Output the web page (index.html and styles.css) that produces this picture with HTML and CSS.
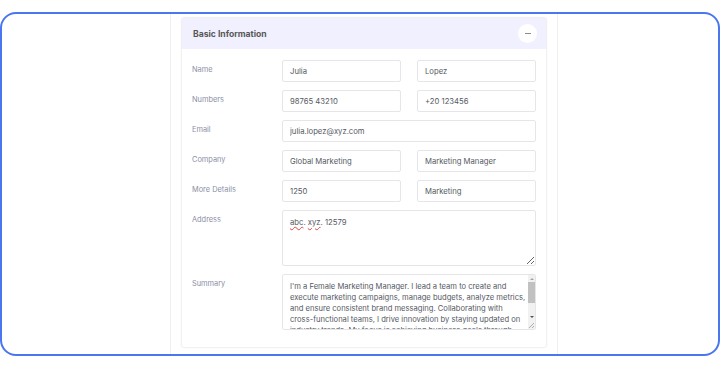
FILE: index.html
```html
<!DOCTYPE html>
<html lang="en">
<head>
  <meta charset="UTF-8" />
  <title>Basic Information</title>
  <link rel="stylesheet" href="styles.css">
</head>
<body>
  <div class="frame">
    <div class="column">
      <div class="card">
        <div class="card-header">
          <h2>Basic Information</h2>
          <button class="collapse" type="button" aria-label="Collapse"><span></span></button>
        </div>

        <form class="card-body">
          <div class="row">
            <label>Name</label>
            <input type="text" value="Julia">
            <input type="text" value="Lopez">
          </div>
          <div class="row">
            <label>Numbers</label>
            <input type="text" value="98765 43210">
            <input type="text" value="+20 123456">
          </div>
          <div class="row">
            <label>Email</label>
            <input type="text" class="wide" value="julia.lopez@xyz.com">
          </div>
          <div class="row">
            <label>Company</label>
            <input type="text" value="Global Marketing">
            <input type="text" value="Marketing Manager">
          </div>
          <div class="row">
            <label>More Details</label>
            <input type="text" value="1250">
            <input type="text" value="Marketing">
          </div>
          <div class="row">
            <label>Address</label>
            <div class="area wide"><span class="typo">abc</span>. <span class="typo">xyz</span>. 12579</div>
          </div>
          <div class="row">
            <label>Summary</label>
            <div class="scroll-box wide">
              <textarea spellcheck="false">I'm a Female Marketing Manager. I lead a team to create and
execute marketing campaigns, manage budgets, analyze metrics,
and ensure consistent brand messaging. Collaborating with
cross-functional teams, I drive innovation by staying updated on
industry trends. My focus is achieving business goals through
data-driven strategies and creative problem solving.</textarea>
              <div class="scrollbar">
                <span class="arrow up"></span>
                <span class="track"><span class="thumb"></span></span>
                <span class="arrow down"></span>
                <svg class="grip" width="7" height="9" viewBox="0 0 7 9">
                  <path d="M6 3L1 8M6 6L4 8" stroke="#9a9a9a" stroke-width="0.8" fill="none"/>
                </svg>
              </div>
            </div>
          </div>
        </form>
      </div>
    </div>
  </div>
</body>
</html>
```

FILE: styles.css
```css
body {
  margin: 0;
  background: #fff;
  font-family: "Inter", "Open Sans", sans-serif;
}

.frame {
  margin-top: 12px;
  height: 344px;
  box-sizing: border-box;
  border: 2px solid #4a77ef;
  border-radius: 16px;
  overflow: hidden;
  display: flex;
}

.column {
  width: 388px;
  margin-left: 168px;
  box-sizing: border-box;
  padding: 3px 10px 0;
  border-left: 1px solid #f1f1f3;
  border-right: 1px solid #f1f1f3;
}

.card {
  border: 1px solid #f0f0f3;
  border-radius: 3px;
  box-shadow: 0 0 2px rgba(0, 0, 0, 0.03);
}

.card-header {
  height: 31px;
  display: flex;
  align-items: center;
  justify-content: space-between;
  padding: 0 9px 0 11px;
  background: #f1f0fe;
}

.card-header h2 {
  margin: 0;
  font-size: 8.6px;
  font-weight: 700;
  color: #575757;
}

.collapse {
  width: 19px;
  height: 19px;
  padding: 0;
  border: none;
  border-radius: 50%;
  background: #fff;
  display: flex;
  align-items: center;
  justify-content: center;
  cursor: pointer;
}

.collapse span {
  width: 6px;
  height: 1px;
  background: #8a8a8a;
}

.card-body {
  padding: 11px 10px 17px;
  display: flex;
  flex-direction: column;
  gap: 8px;
}

.row {
  display: grid;
  grid-template-columns: 74px minmax(0, 1fr) minmax(0, 1fr);
  column-gap: 16px;
}

.row label {
  padding-top: 5px;
  font-size: 7.4px;
  line-height: 10px;
  color: #8b8fa6;
}

input,
.area,
.scroll-box {
  box-sizing: border-box;
  margin: 0;
  width: 100%;
  min-width: 0;
  height: 22px;
  padding: 0 7px;
  border: 1px solid #e6e6ea;
  border-radius: 2px;
  font-family: "Inter", "Open Sans", sans-serif;
  font-size: 7.7px;
  color: #555a63;
  background: #fff;
  outline: none;
}

.wide {
  grid-column: span 2;
}

.area {
  height: 56px;
  padding: 6px 7px;
  line-height: 11px;
  overflow: auto;
  resize: vertical;
  white-space: pre-wrap;
}

.typo {
  text-decoration: underline wavy #e0443c;
  text-decoration-thickness: 1px;
  text-underline-offset: 1px;
}

/* summary: textarea with a drawn scrollbar beside it */
.scroll-box {
  height: 56px;
  padding: 0;
  display: flex;
  overflow: hidden;
}

.scroll-box textarea {
  flex: 1;
  min-width: 0;
  margin: 0;
  padding: 6px 0 0 7px;
  border: none;
  outline: none;
  resize: none;
  overflow: hidden;
  white-space: pre;
  font-family: "Inter", "Open Sans", sans-serif;
  font-size: 7.6px;
  line-height: 11px;
  color: #555a63;
}

.scrollbar {
  width: 7px;
  display: flex;
  flex-direction: column;
  background: #f1f1f1;
}

.arrow {
  height: 7px;
  display: flex;
  align-items: center;
  justify-content: center;
}

.arrow::before {
  content: "";
  border-left: 2px solid transparent;
  border-right: 2px solid transparent;
}

.arrow.up::before {
  border-bottom: 2px solid #a3a3a3;
}

.arrow.down::before {
  border-top: 2px solid #505050;
}

.track {
  flex: 1;
  display: flex;
  flex-direction: column;
}

.thumb {
  height: 21px;
  background: #c1c1c1;
}

.grip {
  display: block;
  flex: none;
}
```
